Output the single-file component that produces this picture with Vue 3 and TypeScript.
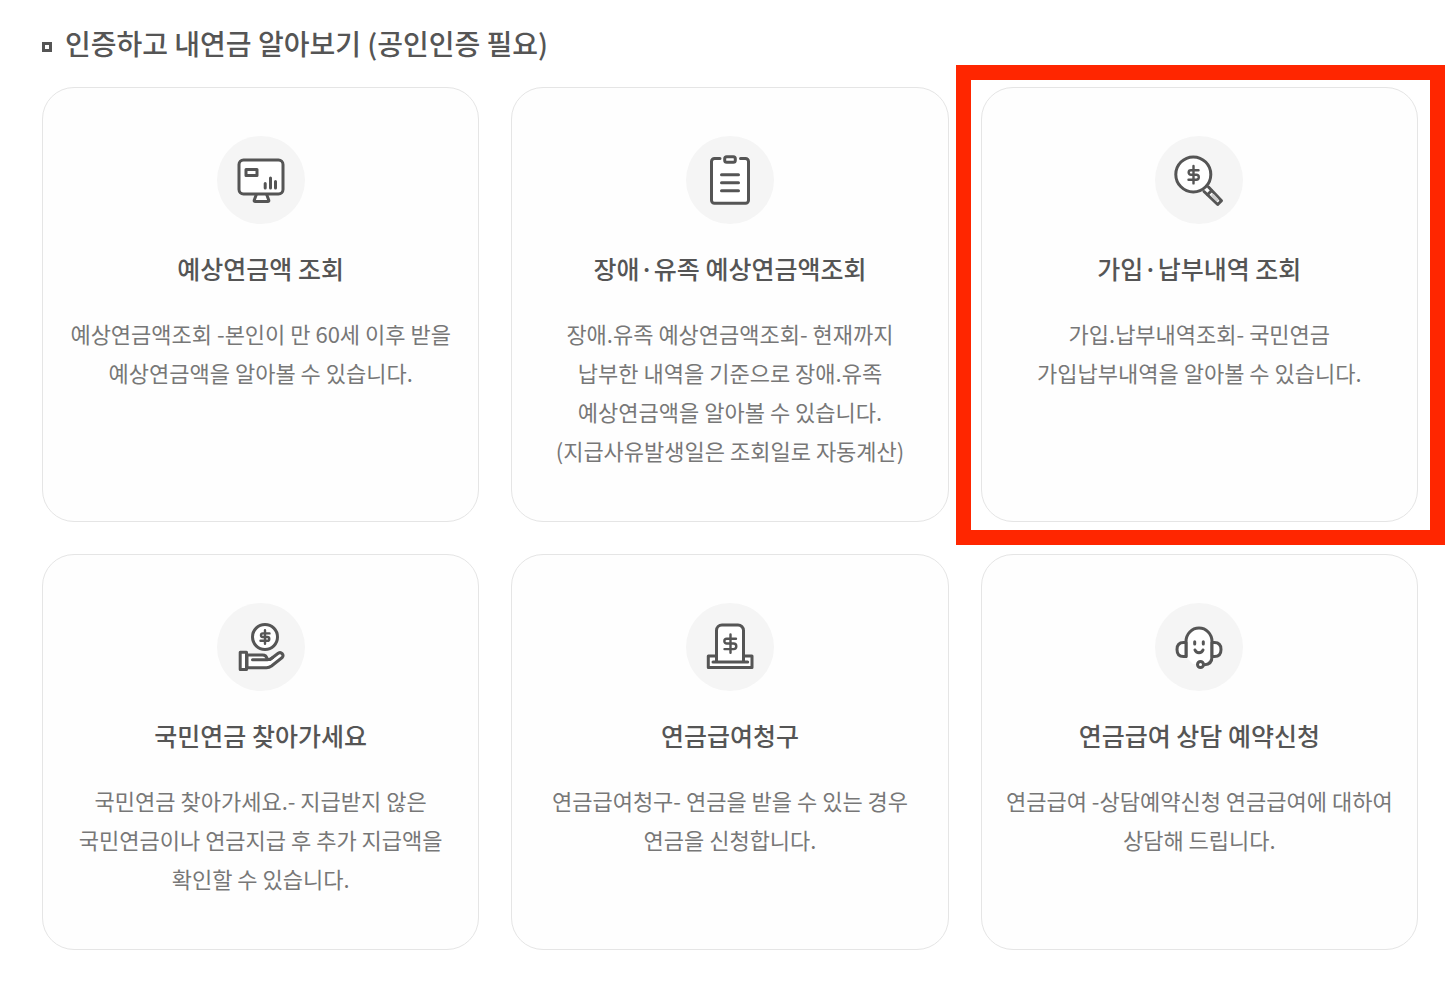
<script setup lang="ts">
type IconName = 'monitor' | 'clipboard' | 'search' | 'hand' | 'claim' | 'support'

interface Service {
  icon: IconName
  title: string
  lines: string[]
  highlighted?: boolean
}

const services: Service[] = [
  {
    icon: 'monitor',
    title: '예상연금액 조회',
    lines: ['예상연금액조회 -본인이 만 60세 이후 받을', '예상연금액을 알아볼 수 있습니다.'],
  },
  {
    icon: 'clipboard',
    title: '장애·유족 예상연금액조회',
    lines: [
      '장애.유족 예상연금액조회- 현재까지',
      '납부한 내역을 기준으로 장애.유족',
      '예상연금액을 알아볼 수 있습니다.',
      '(지급사유발생일은 조회일로 자동계산)',
    ],
  },
  {
    icon: 'search',
    title: '가입·납부내역 조회',
    lines: ['가입.납부내역조회- 국민연금', '가입납부내역을 알아볼 수 있습니다.'],
    highlighted: true,
  },
  {
    icon: 'hand',
    title: '국민연금 찾아가세요',
    lines: ['국민연금 찾아가세요.- 지급받지 않은', '국민연금이나 연금지급 후 추가 지급액을', '확인할 수 있습니다.'],
  },
  {
    icon: 'claim',
    title: '연금급여청구',
    lines: ['연금급여청구- 연금을 받을 수 있는 경우', '연금을 신청합니다.'],
  },
  {
    icon: 'support',
    title: '연금급여 상담 예약신청',
    lines: ['연금급여 -상담예약신청 연금급여에 대하여', '상담해 드립니다.'],
  },
]
</script>

<template>
  <main class="page">
    <h1 class="heading"><span class="bullet" aria-hidden="true"></span>인증하고 내연금 알아보기 (공인인증 필요)</h1>
    <ul class="grid">
      <li v-for="service in services" :key="service.title" class="cell">
        <a href="#" class="card">
          <svg class="icon" viewBox="0 0 88 88" aria-hidden="true">
            <circle class="disc" cx="44" cy="44" r="44" />
            <g v-if="service.icon === 'monitor'">
              <path class="fill" d="M39.5 58 37.3 64q-.5 1.5 1 1.5H50.7q1.5 0 1-1.5L49.5 58" />
              <rect class="fill" x="22" y="23.9" width="44" height="34" rx="4.5" />
              <rect x="29" y="33.4" width="11" height="6" />
              <path d="M48.2 47.5V52M53.5 42V52M58.5 45.5V52" />
            </g>
            <g v-else-if="service.icon === 'clipboard'">
              <rect class="paper" x="25.5" y="22.5" width="37" height="45" rx="3" />
              <path d="M34 22.5H28.5a3 3 0 0 0-3 3V64.3a3 3 0 0 0 3 3H59.5a3 3 0 0 0 3-3V25.5a3 3 0 0 0-3-3H54.5" />
              <rect class="fill" x="38.7" y="20.8" width="10.6" height="5.4" rx="2" />
              <path d="M35.5 38.7H52.5M35.5 46.7H52.5M35.5 54.7H52.5" />
            </g>
            <g v-else-if="service.icon === 'search'">
              <path class="fill" d="M53.5 51 66.5 64.8 62.7 68.5 49 55.5" />
              <path class="grip" d="M57.8 59.3 62 63.7" />
              <path d="M52.7 58.5 56.5 54.7" />
              <circle class="fill" cx="38.3" cy="38.4" r="17.5" />
              <path class="dollar" transform="translate(38.5 38.7)" d="M5-4.5H-2.6a2.25 2.25 0 0 0 0 4.5H2.8a2.5 2.5 0 0 1 0 5H-5M0-8.7V8.7" />
            </g>
            <g v-else-if="service.icon === 'hand'">
              <circle class="fill" cx="48" cy="34" r="12.5" />
              <path class="dollar" transform="translate(48 34)" d="M4.5-3.6H-2.2a1.8 1.8 0 0 0 0 3.6H2.4a1.9 1.9 0 0 1 0 3.8H-4.5M0-6.7V6.7" />
              <path class="fill" d="M30 52H45.5q4 0 4.5 4L53 56.5 61.2 50.3c3-2 6.2 1.5 4 4.2L54.5 63q-2.3 1.7-5 1.7H30z" />
              <path d="M35.5 56.7H50.5q3 0 5-2" />
              <rect class="fill" x="23.2" y="49.3" width="6.3" height="17.2" />
            </g>
            <g v-else-if="service.icon === 'claim'">
              <path class="fill" d="M30.5 53H22.3V64.5H66V53H57.5" />
              <path class="fill" d="M30.5 58V27.5a5.5 5.5 0 0 1 5.5-5.5H52a5.5 5.5 0 0 1 5.5 5.5V58" />
              <path d="M27 59H61.7" />
              <path class="dollar" transform="translate(44.5 40.5)" d="M5.5-4.7H-3.8a2.35 2.35 0 0 0 0 4.7H3a2.8 2.8 0 0 1 0 5.6H-6M0-9V9.3" />
            </g>
            <g v-else>
              <path class="paper" d="M31 54V38a13 13 0 0 1 26 0V54l-7 7H38z" />
              <path d="M31 53.5V38.5a13 13.5 0 0 1 26 0V53.5q0 8-7.5 8.2" />
              <path class="fill" d="M31 39.5H28.5q-6.5 0-6.5 7t6.5 7H31z" />
              <path class="fill" d="M57 39.5H59.5q6.5 0 6.5 7t-6.5 7H57z" />
              <circle class="fill" cx="45.5" cy="61.5" r="3" />
              <path d="M39.7 38.7V41M48.3 38.7V41M40 47q1 2.7 4 2.7t4-2.7" />
            </g>
          </svg>
          <h2 class="title">{{ service.title }}</h2>
          <p class="description">
            <span v-for="line in service.lines" :key="line" class="line">{{ line }}</span>
          </p>
        </a>
        <span v-if="service.highlighted" class="marker" aria-hidden="true"></span>
      </li>
    </ul>
  </main>
</template>

<style>
body {
  margin: 0;
  background: #fff;
}
</style>

<style scoped>
.page {
  box-sizing: border-box;
  padding: 23px 34px 37px 42px;
  font-family: "Noto Sans CJK KR", "Noto Sans", sans-serif;
  color: #555;
}

.heading {
  display: flex;
  align-items: center;
  gap: 13px;
  margin: 0 0 24px;
  font-size: 28px;
  font-weight: 500;
  line-height: 40px;
}

.bullet {
  box-sizing: border-box;
  flex: none;
  width: 10px;
  height: 10px;
  margin-top: 8px;
  border: 3px solid #555;
}

.grid {
  display: grid;
  grid-template-columns: repeat(3, minmax(0, 1fr));
  gap: 32px;
  margin: 0;
  padding: 0;
  list-style: none;
}

.cell {
  position: relative;
  display: flex;
}

.card {
  box-sizing: border-box;
  display: flex;
  flex: 1;
  flex-direction: column;
  align-items: center;
  min-width: 0;
  padding: 48px 16px 51px;
  border: 1px solid #e5e5e5;
  border-radius: 32px;
  background: #fefefe;
  color: inherit;
  text-align: center;
  text-decoration: none;
}

.icon {
  display: block;
  width: 88px;
  height: 88px;
  fill: none;
  stroke: #555;
  stroke-width: 3;
  stroke-linecap: round;
  stroke-linejoin: round;
}

.disc {
  fill: #f5f5f5;
  stroke: none;
}

.fill {
  fill: #fff;
}

.paper {
  fill: #fff;
  stroke: none;
}

.dollar {
  stroke-width: 2.4;
}

.grip {
  stroke: #ccc;
}

.title {
  margin: 25px 0 27px;
  font-size: 25px;
  font-weight: 500;
  line-height: 38px;
}

.description {
  margin: 0;
  color: #777;
  font-size: 22px;
  font-weight: 400;
  line-height: 39px;
}

.line {
  display: block;
}

.marker {
  position: absolute;
  inset: -22px -27px -23px -25px;
  z-index: 1;
  border: 15px solid #ff2600;
  pointer-events: none;
}
</style>
